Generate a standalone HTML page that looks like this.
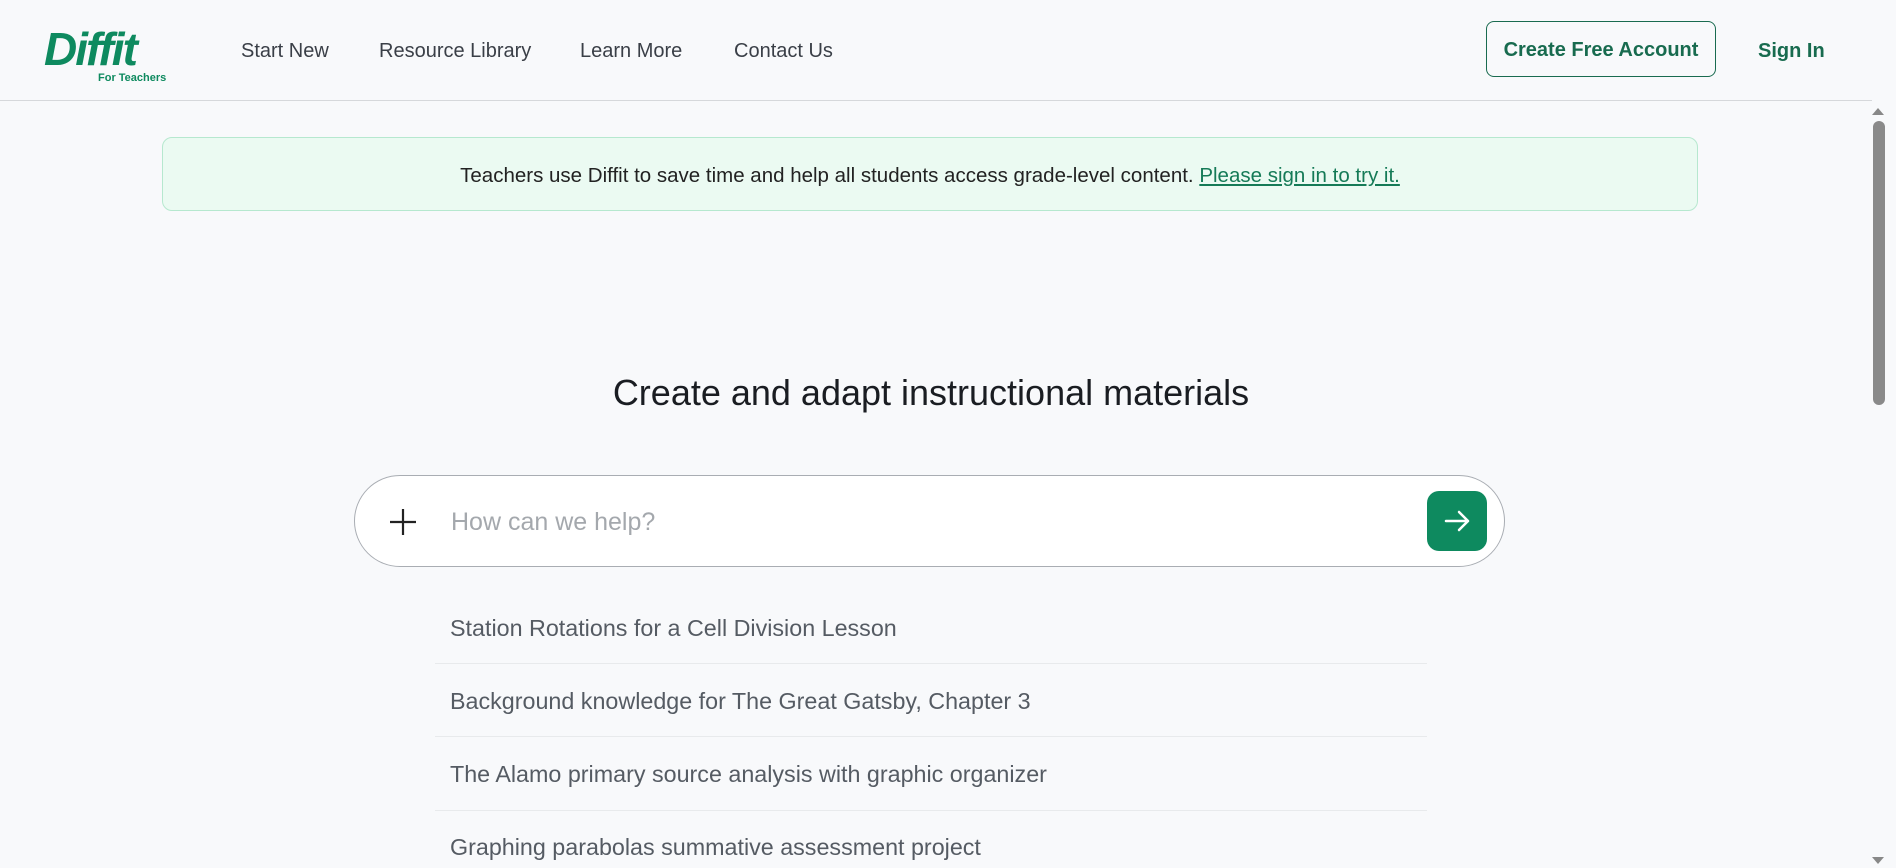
<!DOCTYPE html>
<html><head><meta charset="utf-8"><style>
*{box-sizing:border-box;margin:0;padding:0}
body{width:1896px;height:868px;overflow:hidden;background:#f8f9fb;font-family:"Liberation Sans",sans-serif;position:relative;color:#333}
.hdr{position:absolute;left:0;top:0;width:1872px;height:101px;border-bottom:1px solid #d6d8db}
.logo{position:absolute;left:44px;top:26px;color:#0e8a5f;font:italic 900 46px/1 "Liberation Sans",sans-serif;letter-spacing:-2px}
.logo small{position:absolute;left:54px;top:46px;font:bold 11px "Liberation Sans",sans-serif;letter-spacing:0;font-style:normal;white-space:nowrap}
.nav{position:absolute;top:40px;font-size:20px;color:#3a3f47}
.btn{position:absolute;left:1486px;top:21px;width:230px;height:56px;border:1px solid #1a6b50;border-radius:8px;color:#186b4f;font-size:20px;font-weight:bold;text-align:center;line-height:56px}
.sign{position:absolute;left:1758px;top:40px;color:#186b4f;font-size:20px;font-weight:bold}
.banner{position:absolute;left:162px;top:137px;width:1536px;height:74px;background:#ebfaf2;border:1px solid #b6e8cf;border-radius:10px;text-align:center;line-height:76px;font-size:20.5px;color:#222}
.banner a{color:#157a57;text-decoration:underline}
h1{position:absolute;left:0;width:1862px;top:372px;text-align:center;font-weight:normal;font-size:36px;color:#1a1d22}
.inp{position:absolute;left:354px;top:475px;width:1151px;height:92px;background:#fff;border:1px solid #a9adb3;border-radius:46px}
.plus{position:absolute;left:34px;top:32px}
.ph{position:absolute;left:96px;top:32px;font-size:25px;color:#a4a8ad}
.go{position:absolute;left:1072px;top:15px;width:60px;height:60px;background:#0e8a5f;border-radius:12px}
.item{position:absolute;left:450px;font-size:23.3px;color:#555b63}
.dv{position:absolute;left:435px;width:992px;height:1px;background:#e8eaec}
.sb{position:absolute;left:1872px;top:101px;width:24px;height:767px;background:#f8f9fb}
.thumb{position:absolute;left:1873px;top:121px;width:12px;height:284px;background:#8a8a8a;border-radius:6px}
</style></head><body>
<div class="hdr">
<div class="logo">Diffit<small>For Teachers</small></div>
<div class="nav" style="left:241px">Start New</div>
<div class="nav" style="left:379px">Resource Library</div>
<div class="nav" style="left:580px">Learn More</div>
<div class="nav" style="left:734px">Contact Us</div>
<div class="btn">Create Free Account</div>
<div class="sign">Sign In</div>
</div>
<div class="banner">Teachers use Diffit to save time and help all students access grade-level content. <a>Please sign in to try it.</a></div>
<h1>Create and adapt instructional materials</h1>
<div class="inp"><svg class="plus" width="28" height="28" viewBox="0 0 28 28"><path d="M14 1v26M1 14h26" stroke="#222" stroke-width="2.2"/></svg><div class="ph">How can we help?</div>
<div class="go"><svg width="60" height="60" viewBox="0 0 60 60"><path d="M19 30h22M32 21l9 9-9 9" stroke="#fff" stroke-width="2.5" fill="none" stroke-linecap="round" stroke-linejoin="round"/></svg></div></div>
<div class="item" style="top:615px">Station Rotations for a Cell Division Lesson</div>
<div class="dv" style="top:663px"></div>
<div class="item" style="top:688px">Background knowledge for The Great Gatsby, Chapter 3</div>
<div class="dv" style="top:736px"></div>
<div class="item" style="top:761px">The Alamo primary source analysis with graphic organizer</div>
<div class="dv" style="top:810px"></div>
<div class="item" style="top:834px">Graphing parabolas summative assessment project</div>
<div class="sb"></div><div class="thumb"></div>
<svg style="position:absolute;left:1871px;top:106px" width="14" height="10"><path d="M1 9L7 2l6 7z" fill="#888"/></svg>
<svg style="position:absolute;left:1871px;top:856px" width="14" height="10"><path d="M1 1l6 7 6-7z" fill="#888"/></svg>
</body></html>
